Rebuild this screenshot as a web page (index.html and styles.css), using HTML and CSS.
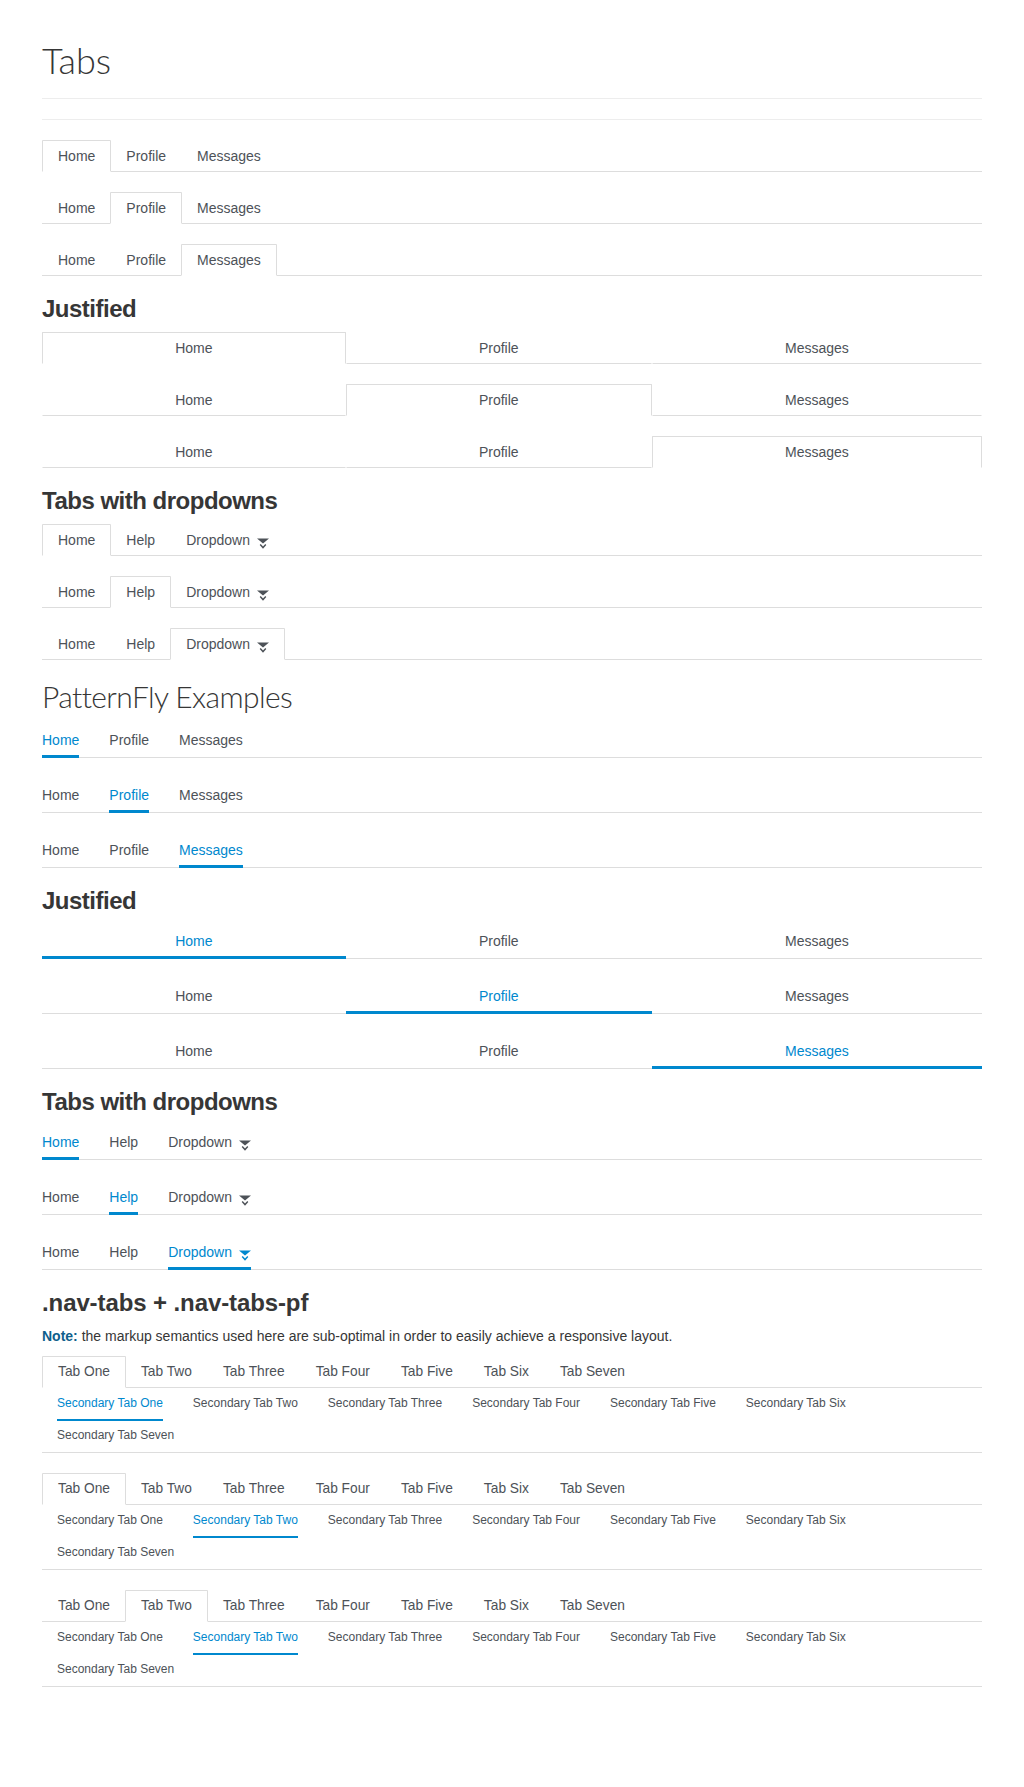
FILE: index.html
```html
<!DOCTYPE html>
<html lang="en">
<head>
<meta charset="utf-8">
<title>Tabs</title>
<link rel="stylesheet" href="styles.css">
</head>
<body>
<div class="container">
  <div class="page-header"><h1 class="title">Tabs</h1></div>
  <div class="rule"></div>

  <ul class="tabs"><li class="active"><a href="#">Home</a></li><li><a href="#">Profile</a></li><li><a href="#">Messages</a></li></ul>
  <ul class="tabs"><li><a href="#">Home</a></li><li class="active"><a href="#">Profile</a></li><li><a href="#">Messages</a></li></ul>
  <ul class="tabs"><li><a href="#">Home</a></li><li><a href="#">Profile</a></li><li class="active"><a href="#">Messages</a></li></ul>

  <h2>Justified</h2>
  <ul class="tabs justified"><li class="active"><a href="#">Home</a></li><li><a href="#">Profile</a></li><li><a href="#">Messages</a></li></ul>
  <ul class="tabs justified"><li><a href="#">Home</a></li><li class="active"><a href="#">Profile</a></li><li><a href="#">Messages</a></li></ul>
  <ul class="tabs justified"><li><a href="#">Home</a></li><li><a href="#">Profile</a></li><li class="active"><a href="#">Messages</a></li></ul>

  <h2>Tabs with dropdowns</h2>
  <ul class="tabs"><li class="active"><a href="#">Home</a></li><li><a href="#">Help</a></li><li><a href="#">Dropdown<svg class="caret" width="12" height="11" viewBox="0 0 12 11"><path d="M0 0.5H12L6 5.5Z" fill="currentColor"/><path d="M3.2 6.6L6 9.6L8.8 6.6" fill="none" stroke="currentColor" stroke-width="1.4"/></svg></a></li></ul>
  <ul class="tabs"><li><a href="#">Home</a></li><li class="active"><a href="#">Help</a></li><li><a href="#">Dropdown<svg class="caret" width="12" height="11" viewBox="0 0 12 11"><path d="M0 0.5H12L6 5.5Z" fill="currentColor"/><path d="M3.2 6.6L6 9.6L8.8 6.6" fill="none" stroke="currentColor" stroke-width="1.4"/></svg></a></li></ul>
  <ul class="tabs"><li><a href="#">Home</a></li><li><a href="#">Help</a></li><li class="active"><a href="#">Dropdown<svg class="caret" width="12" height="11" viewBox="0 0 12 11"><path d="M0 0.5H12L6 5.5Z" fill="currentColor"/><path d="M3.2 6.6L6 9.6L8.8 6.6" fill="none" stroke="currentColor" stroke-width="1.4"/></svg></a></li></ul>

  <h1 class="title sub">PatternFly Examples</h1>
  <ul class="pf"><li class="active"><a href="#">Home</a></li><li><a href="#">Profile</a></li><li><a href="#">Messages</a></li></ul>
  <ul class="pf"><li><a href="#">Home</a></li><li class="active"><a href="#">Profile</a></li><li><a href="#">Messages</a></li></ul>
  <ul class="pf"><li><a href="#">Home</a></li><li><a href="#">Profile</a></li><li class="active"><a href="#">Messages</a></li></ul>

  <h2>Justified</h2>
  <ul class="pf justified"><li class="active"><a href="#">Home</a></li><li><a href="#">Profile</a></li><li><a href="#">Messages</a></li></ul>
  <ul class="pf justified"><li><a href="#">Home</a></li><li class="active"><a href="#">Profile</a></li><li><a href="#">Messages</a></li></ul>
  <ul class="pf justified"><li><a href="#">Home</a></li><li><a href="#">Profile</a></li><li class="active"><a href="#">Messages</a></li></ul>

  <h2>Tabs with dropdowns</h2>
  <ul class="pf"><li class="active"><a href="#">Home</a></li><li><a href="#">Help</a></li><li><a href="#">Dropdown<svg class="caret" width="12" height="11" viewBox="0 0 12 11"><path d="M0 0.5H12L6 5.5Z" fill="currentColor"/><path d="M3.2 6.6L6 9.6L8.8 6.6" fill="none" stroke="currentColor" stroke-width="1.4"/></svg></a></li></ul>
  <ul class="pf"><li><a href="#">Home</a></li><li class="active"><a href="#">Help</a></li><li><a href="#">Dropdown<svg class="caret" width="12" height="11" viewBox="0 0 12 11"><path d="M0 0.5H12L6 5.5Z" fill="currentColor"/><path d="M3.2 6.6L6 9.6L8.8 6.6" fill="none" stroke="currentColor" stroke-width="1.4"/></svg></a></li></ul>
  <ul class="pf"><li><a href="#">Home</a></li><li><a href="#">Help</a></li><li class="active"><a href="#">Dropdown<svg class="caret" width="12" height="11" viewBox="0 0 12 11"><path d="M0 0.5H12L6 5.5Z" fill="currentColor"/><path d="M3.2 6.6L6 9.6L8.8 6.6" fill="none" stroke="currentColor" stroke-width="1.4"/></svg></a></li></ul>

  <h2 class="code-heading">.nav-tabs + .nav-tabs-pf</h2>
  <p class="note"><strong>Note:</strong> the markup semantics used here are sub-optimal in order to easily achieve a responsive layout.</p>

  <div class="tabset">
    <ul class="tabs small"><li class="active"><a href="#">Tab One</a></li><li><a href="#">Tab Two</a></li><li><a href="#">Tab Three</a></li><li><a href="#">Tab Four</a></li><li><a href="#">Tab Five</a></li><li><a href="#">Tab Six</a></li><li><a href="#">Tab Seven</a></li></ul>
    <ul class="pf secondary"><li class="active"><a href="#">Secondary Tab One</a></li><li><a href="#">Secondary Tab Two</a></li><li><a href="#">Secondary Tab Three</a></li><li><a href="#">Secondary Tab Four</a></li><li><a href="#">Secondary Tab Five</a></li><li><a href="#">Secondary Tab Six</a></li><li><a href="#">Secondary Tab Seven</a></li></ul>
  </div>

  <div class="tabset">
    <ul class="tabs small"><li class="active"><a href="#">Tab One</a></li><li><a href="#">Tab Two</a></li><li><a href="#">Tab Three</a></li><li><a href="#">Tab Four</a></li><li><a href="#">Tab Five</a></li><li><a href="#">Tab Six</a></li><li><a href="#">Tab Seven</a></li></ul>
    <ul class="pf secondary"><li><a href="#">Secondary Tab One</a></li><li class="active"><a href="#">Secondary Tab Two</a></li><li><a href="#">Secondary Tab Three</a></li><li><a href="#">Secondary Tab Four</a></li><li><a href="#">Secondary Tab Five</a></li><li><a href="#">Secondary Tab Six</a></li><li><a href="#">Secondary Tab Seven</a></li></ul>
  </div>

  <div class="tabset">
    <ul class="tabs small"><li><a href="#">Tab One</a></li><li class="active"><a href="#">Tab Two</a></li><li><a href="#">Tab Three</a></li><li><a href="#">Tab Four</a></li><li><a href="#">Tab Five</a></li><li><a href="#">Tab Six</a></li><li><a href="#">Tab Seven</a></li></ul>
    <ul class="pf secondary"><li><a href="#">Secondary Tab One</a></li><li class="active"><a href="#">Secondary Tab Two</a></li><li><a href="#">Secondary Tab Three</a></li><li><a href="#">Secondary Tab Four</a></li><li><a href="#">Secondary Tab Five</a></li><li><a href="#">Secondary Tab Six</a></li><li><a href="#">Secondary Tab Seven</a></li></ul>
  </div>
</div>
</body>
</html>
```

FILE: styles.css
```css
html, body {
  margin: 0;
  padding: 0;
  background: #fff;
}

body {
  font-family: "Liberation Sans", Arial, sans-serif;
  font-size: 14px;
  line-height: 20px;
  color: #363636;
}

a {
  text-decoration: none;
}

.container {
  width: 940px;
  margin: 0 auto;
}

.page-header {
  margin: 40px 0 20px;
  padding-bottom: 18px;
  border-bottom: 1px solid #ededed;
}

.title {
  margin: 0;
  font-family: Lato, "Liberation Sans", sans-serif;
  font-size: 36px;
  line-height: 40px;
  font-weight: 300;
  color: #363636;
}

.title.sub {
  margin: 20px 0 10px;
  font-size: 30px;
  line-height: 33px;
  letter-spacing: -0.6px;
}

.rule {
  border-top: 1px solid #ededed;
  margin-bottom: 20px;
}

h2 {
  margin: 20px 0 10px;
  font-size: 24px;
  line-height: 26px;
  font-weight: bold;
  letter-spacing: -0.5px;
  color: #363636;
}

h2.code-heading {
  letter-spacing: -0.1px;
}

.note {
  margin: 0 0 10px;
  height: 20px;
  color: #363636;
}

.note strong {
  color: #0f5f8c;
}

/* Bootstrap-style tabs */
.tabs {
  display: flex;
  list-style: none;
  margin: 0 0 20px;
  padding: 0;
  border-bottom: 1px solid #ddd;
  font-size: 14px;
}

.tabs li {
  margin-bottom: -1px;
}

.tabs a {
  box-sizing: border-box;
  display: block;
  height: 32px;
  padding: 5px 15px;
  margin-right: -1px;
  line-height: 20px;
  white-space: nowrap;
  border: 1px solid transparent;
  border-radius: 1px 1px 0 0;
  color: #4d5258;
}

.tabs .active a {
  background: #fff;
  border-color: #ddd #ddd transparent;
}

.tabs.justified {
  border-bottom: 0;
}

.tabs.justified li {
  flex: 1 1 auto;
  margin-bottom: 0;
  text-align: center;
}

.tabs.justified a {
  margin-right: 0;
  border-bottom: 1px solid #ddd;
}

.tabs.justified .active a {
  border-color: #ddd #ddd #fff;
}

.tabs.small {
  margin-bottom: 0;
  font-size: 13.75px;
}

.caret {
  display: inline-block;
  margin-left: 7px;
  vertical-align: -4px;
}

/* PatternFly-style tabs */
.pf {
  display: flex;
  list-style: none;
  margin: 0 0 20px;
  padding: 0;
  border-bottom: 1px solid #ddd;
  font-size: 14px;
}

.pf a {
  box-sizing: border-box;
  position: relative;
  display: block;
  height: 34px;
  margin: 0 15px;
  padding: 7px 0;
  line-height: 20px;
  white-space: nowrap;
  color: #4d5258;
}

.pf li:first-child a {
  margin-left: 0;
}

.pf .active a {
  color: #0088ce;
}

.pf .active a::before {
  content: "";
  position: absolute;
  left: 0;
  right: 0;
  bottom: -1px;
  height: 3px;
  background: #0088ce;
}

.pf.justified li {
  flex: 1 1 auto;
  text-align: center;
}

.pf.justified a {
  margin: 0;
  padding: 7px 15px;
}

.pf.secondary {
  flex-wrap: wrap;
  font-size: 12px;
}

.pf.secondary li:first-child {
  padding-left: 15px;
}

.pf.secondary a {
  height: 32px;
  padding: 5px 0 7px;
}

.pf.secondary .active a::before {
  height: 2px;
}

.tabset {
  margin-bottom: 20px;
}
```
